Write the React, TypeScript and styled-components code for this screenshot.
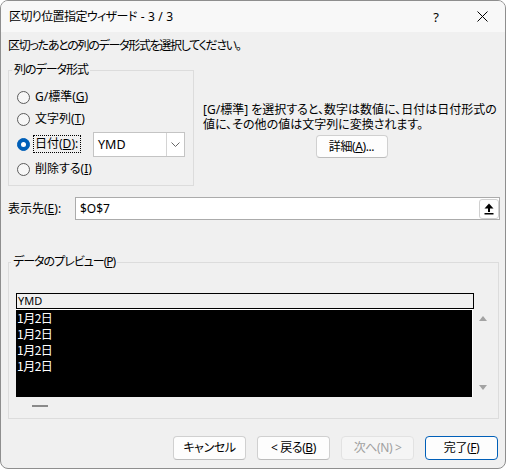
import React from 'react';
import styled, { createGlobalStyle } from 'styled-components';

const GlobalStyle = createGlobalStyle`
  body {
    margin: 0;
    background: #ffffff;
    font-family: "Noto Sans", "Noto Sans CJK JP", sans-serif;
    font-size: 12px;
    color: #000;
  }
`;

const Window = styled.div`
  width: 506px;
  height: 469px;
  box-sizing: border-box;
  border: 1px solid #8e8e8e;
  border-radius: 8px;
  background: #f0f0f0;
  overflow: hidden;
  display: flex;
  flex-direction: column;
  font-feature-settings: "palt";
`;

const TitleBar = styled.div`
  height: 31px;
  background: #f8f8f8;
  display: flex;
  align-items: center;
  padding-left: 8px;
`;

const TitleText = styled.div`
  flex: 1;
  line-height: 16px;
  letter-spacing: -0.6px;
  word-spacing: 1.5px;
`;

const CaptionButton = styled.div`
  width: 46px;
  height: 31px;
  display: flex;
  align-items: center;
  justify-content: center;
  font-size: 13px;
`;

const Content = styled.div`
  padding: 0 5px 0 7px;
  display: flex;
  flex-direction: column;
`;

const Instruction = styled.div`
  margin-top: 6px;
  line-height: 16px;
  letter-spacing: -1.3px;
`;

const MiddleRow = styled.div`
  margin-top: 8px;
  display: flex;
`;

const GroupBox = styled.fieldset<{ $width?: number }>`
  margin: 0;
  min-width: 0;
  box-sizing: border-box;
  width: ${p => (p.$width ? `${p.$width}px` : 'auto')};
  border: 1px solid #dcdcdc;
  padding: 9px 8px 6px 8px;
`;

const Legend = styled.legend`
  padding: 0 2px;
  margin-left: -5px;
  line-height: 16px;
  letter-spacing: -1px;
`;

const RadioList = styled.div`
  display: flex;
  flex-direction: column;
  gap: 2px;
`;

const RadioRow = styled.div<{ $tall?: boolean }>`
  height: ${p => (p.$tall ? 26 : 20)}px;
  display: flex;
  align-items: center;
`;

const RadioDot = styled.span<{ $checked?: boolean }>`
  width: 13px;
  height: 13px;
  box-sizing: border-box;
  border-radius: 50%;
  margin-right: 4px;
  flex: none;
  border: 1px solid ${p => (p.$checked ? '#005fb8' : '#5c5c5c')};
  background: ${p => (p.$checked ? '#005fb8' : '#f7f7f7')};
  display: flex;
  align-items: center;
  justify-content: center;
  &::after {
    content: '';
    display: ${p => (p.$checked ? 'block' : 'none')};
    width: 5px;
    height: 5px;
    border-radius: 50%;
    background: #fff;
  }
`;

const RadioLabel = styled.span<{ $focused?: boolean }>`
  line-height: 16px;
  padding: 0 2px 0 1px;
  outline: ${p => (p.$focused ? '1px dotted #000' : 'none')};
  outline-offset: 0;
`;

const Combo = styled.div`
  margin-left: auto;
  width: 92px;
  height: 25px;
  box-sizing: border-box;
  border: 1px solid #c4c4c4;
  background: #fff;
  display: flex;
  align-items: stretch;
`;

const ComboText = styled.div`
  flex: 1;
  padding-left: 4px;
  display: flex;
  align-items: center;
  font-size: 12.5px;
`;

const ComboArrow = styled.div`
  width: 17px;
  border-left: 1px solid #d4d4d4;
  display: flex;
  align-items: center;
  justify-content: center;
`;

const Description = styled.div`
  flex: 1;
  margin-left: 9px;
  padding-top: 40px;
  display: flex;
  flex-direction: column;
`;

const DescText = styled.p`
  margin: 0;
  line-height: 15px;
  white-space: nowrap;
`;

const Button = styled.div<{ $width?: number; $primary?: boolean; $disabled?: boolean }>`
  width: ${p => p.$width ?? 73}px;
  height: 24px;
  box-sizing: border-box;
  border-radius: 4px;
  border: 1px solid ${p => (p.$primary ? '#005fb8' : p.$disabled ? '#e2e2e2' : '#d0d0d0')};
  border-bottom-color: ${p => (p.$primary ? '#005fb8' : p.$disabled ? '#e2e2e2' : '#bcbcbc')};
  background: ${p => (p.$disabled ? '#f5f5f5' : '#fdfdfd')};
  color: ${p => (p.$disabled ? '#a0a0a0' : '#000')};
  display: flex;
  align-items: center;
  justify-content: center;
  line-height: 16px;
  letter-spacing: -0.4px;
`;

const DetailButton = styled(Button)`
  margin: 3px auto 0;
  height: 23px;
`;

const TargetRow = styled.div`
  margin-top: 11px;
  display: flex;
  align-items: center;
  height: 23px;
`;

const TargetLabel = styled.div`
  width: 67px;
  line-height: 16px;
`;

const TargetInput = styled.div`
  flex: 1;
  height: 23px;
  box-sizing: border-box;
  border: 1px solid #ababab;
  background: #fff;
  display: flex;
  align-items: center;
  padding-left: 4px;
`;

const InputText = styled.div`
  flex: 1;
  line-height: 16px;
`;

const CollapseButton = styled.div`
  width: 20px;
  height: 20px;
  box-sizing: border-box;
  border: 1px solid #d0d0d0;
  border-radius: 3px;
  background: #fdfdfd;
  display: flex;
  align-items: center;
  justify-content: center;
`;

const PreviewGroup = styled(GroupBox)`
  margin-top: 34px;
  margin-right: 1px;
  padding: 23px 0 4px 7px;
`;

const PreviewBody = styled.div`
  display: flex;
`;

const Grid = styled.div`
  width: 458px;
  display: flex;
  flex-direction: column;
`;

const GridHeader = styled.div`
  height: 16px;
  box-sizing: border-box;
  border: 1px solid #000;
  background: #f0f0f0;
  padding-left: 1px;
  line-height: 14px;
  font-size: 11px;
  font-feature-settings: normal;
`;

const GridData = styled.div`
  width: 457px;
  height: 88px;
  box-sizing: border-box;
  background: #000;
  border-top: 1px solid #fff;
  border-right: 1px solid #fff;
  color: #fff;
  padding-left: 1px;
  font-feature-settings: normal;
`;

const GridRow = styled.div`
  height: 16px;
  line-height: 16px;
  font-size: 12px;
  font-family: "Noto Sans CJK JP", sans-serif;
  letter-spacing: -0.5px;
`;

const VScroll = styled.div`
  width: 18px;
  margin-top: 17px;
  height: 87px;
  display: flex;
  flex-direction: column;
  justify-content: space-between;
  align-items: center;
  padding: 6px 0 7px;
  box-sizing: border-box;
`;

const Arrow = styled.div<{ $down?: boolean }>`
  width: 0;
  height: 0;
  border-left: 4.5px solid transparent;
  border-right: 4.5px solid transparent;
  ${p => (p.$down ? 'border-top: 5px solid #a3a3a3;' : 'border-bottom: 5px solid #a3a3a3;')}
`;

const HScroll = styled.div`
  height: 17px;
  display: flex;
  align-items: center;
  padding-left: 16px;
  padding-top: 1px;
  box-sizing: border-box;
`;

const Thumb = styled.div`
  width: 16px;
  height: 2px;
  background: #8a8a8a;
`;

const ButtonRow = styled.div`
  margin-top: 17px;
  display: flex;
  justify-content: flex-end;
  gap: 11px;
  padding-right: 2px;
`;

const rows = ['1月2日', '1月2日', '1月2日', '1月2日'];

export default function App() {
  return (
    <>
      <GlobalStyle />
      <Window>
        <TitleBar>
          <TitleText>区切り位置指定ウィザード - 3 / 3</TitleText>
          <CaptionButton>?</CaptionButton>
          <CaptionButton>
            <svg width="11" height="11" viewBox="0 0 11 11">
              <path d="M0.5 0.5 L10.5 10.5 M10.5 0.5 L0.5 10.5" stroke="#000" strokeWidth="1" />
            </svg>
          </CaptionButton>
        </TitleBar>
        <Content>
          <Instruction>区切ったあとの列のデータ形式を選択してください。</Instruction>
          <MiddleRow>
            <GroupBox $width={186}>
              <Legend>列のデータ形式</Legend>
              <RadioList>
                <RadioRow>
                  <RadioDot />
                  <RadioLabel>G/標準(<u>G</u>)</RadioLabel>
                </RadioRow>
                <RadioRow>
                  <RadioDot />
                  <RadioLabel>文字列(<u>T</u>)</RadioLabel>
                </RadioRow>
                <RadioRow $tall>
                  <RadioDot $checked />
                  <RadioLabel $focused>日付(<u>D</u>):</RadioLabel>
                  <Combo>
                    <ComboText>YMD</ComboText>
                    <ComboArrow>
                      <svg width="9" height="5" viewBox="0 0 9 5">
                        <polyline points="0.5,0.5 4.5,4.5 8.5,0.5" fill="none" stroke="#666" strokeWidth="1" />
                      </svg>
                    </ComboArrow>
                  </Combo>
                </RadioRow>
                <RadioRow>
                  <RadioDot />
                  <RadioLabel>削除する(<u>I</u>)</RadioLabel>
                </RadioRow>
              </RadioList>
            </GroupBox>
            <Description>
              <DescText>
                [G/標準] を選択すると、数字は数値に、日付は日付形式の
                <br />
                値に、その他の値は文字列に変換されます。
              </DescText>
              <DetailButton $width={72}>詳細(<u>A</u>)...</DetailButton>
            </Description>
          </MiddleRow>
          <TargetRow>
            <TargetLabel>表示先(<u>E</u>):</TargetLabel>
            <TargetInput>
              <InputText>$O$7</InputText>
              <CollapseButton>
                <svg width="10" height="12" viewBox="0 0 10 12">
                  <polygon points="5,0.5 9.5,5.5 0.5,5.5" fill="#000" />
                  <rect x="4" y="5" width="2" height="4" fill="#000" />
                  <rect x="0.5" y="10" width="9" height="1.5" fill="#000" />
                </svg>
              </CollapseButton>
            </TargetInput>
          </TargetRow>
          <PreviewGroup>
            <Legend>データのプレビュー(<u>P</u>)</Legend>
            <PreviewBody>
              <Grid>
                <GridHeader>YMD</GridHeader>
                <GridData>
                  {rows.map((r, i) => (
                    <GridRow key={i}>{r}</GridRow>
                  ))}
                </GridData>
              </Grid>
              <VScroll>
                <Arrow />
                <Arrow $down />
              </VScroll>
            </PreviewBody>
            <HScroll>
              <Thumb />
            </HScroll>
          </PreviewGroup>
          <ButtonRow>
            <Button>キャンセル</Button>
            <Button>&lt; 戻る(<u>B</u>)</Button>
            <Button $disabled>次へ(N) &gt;</Button>
            <Button $primary>完了(<u>F</u>)</Button>
          </ButtonRow>
        </Content>
      </Window>
    </>
  );
}
